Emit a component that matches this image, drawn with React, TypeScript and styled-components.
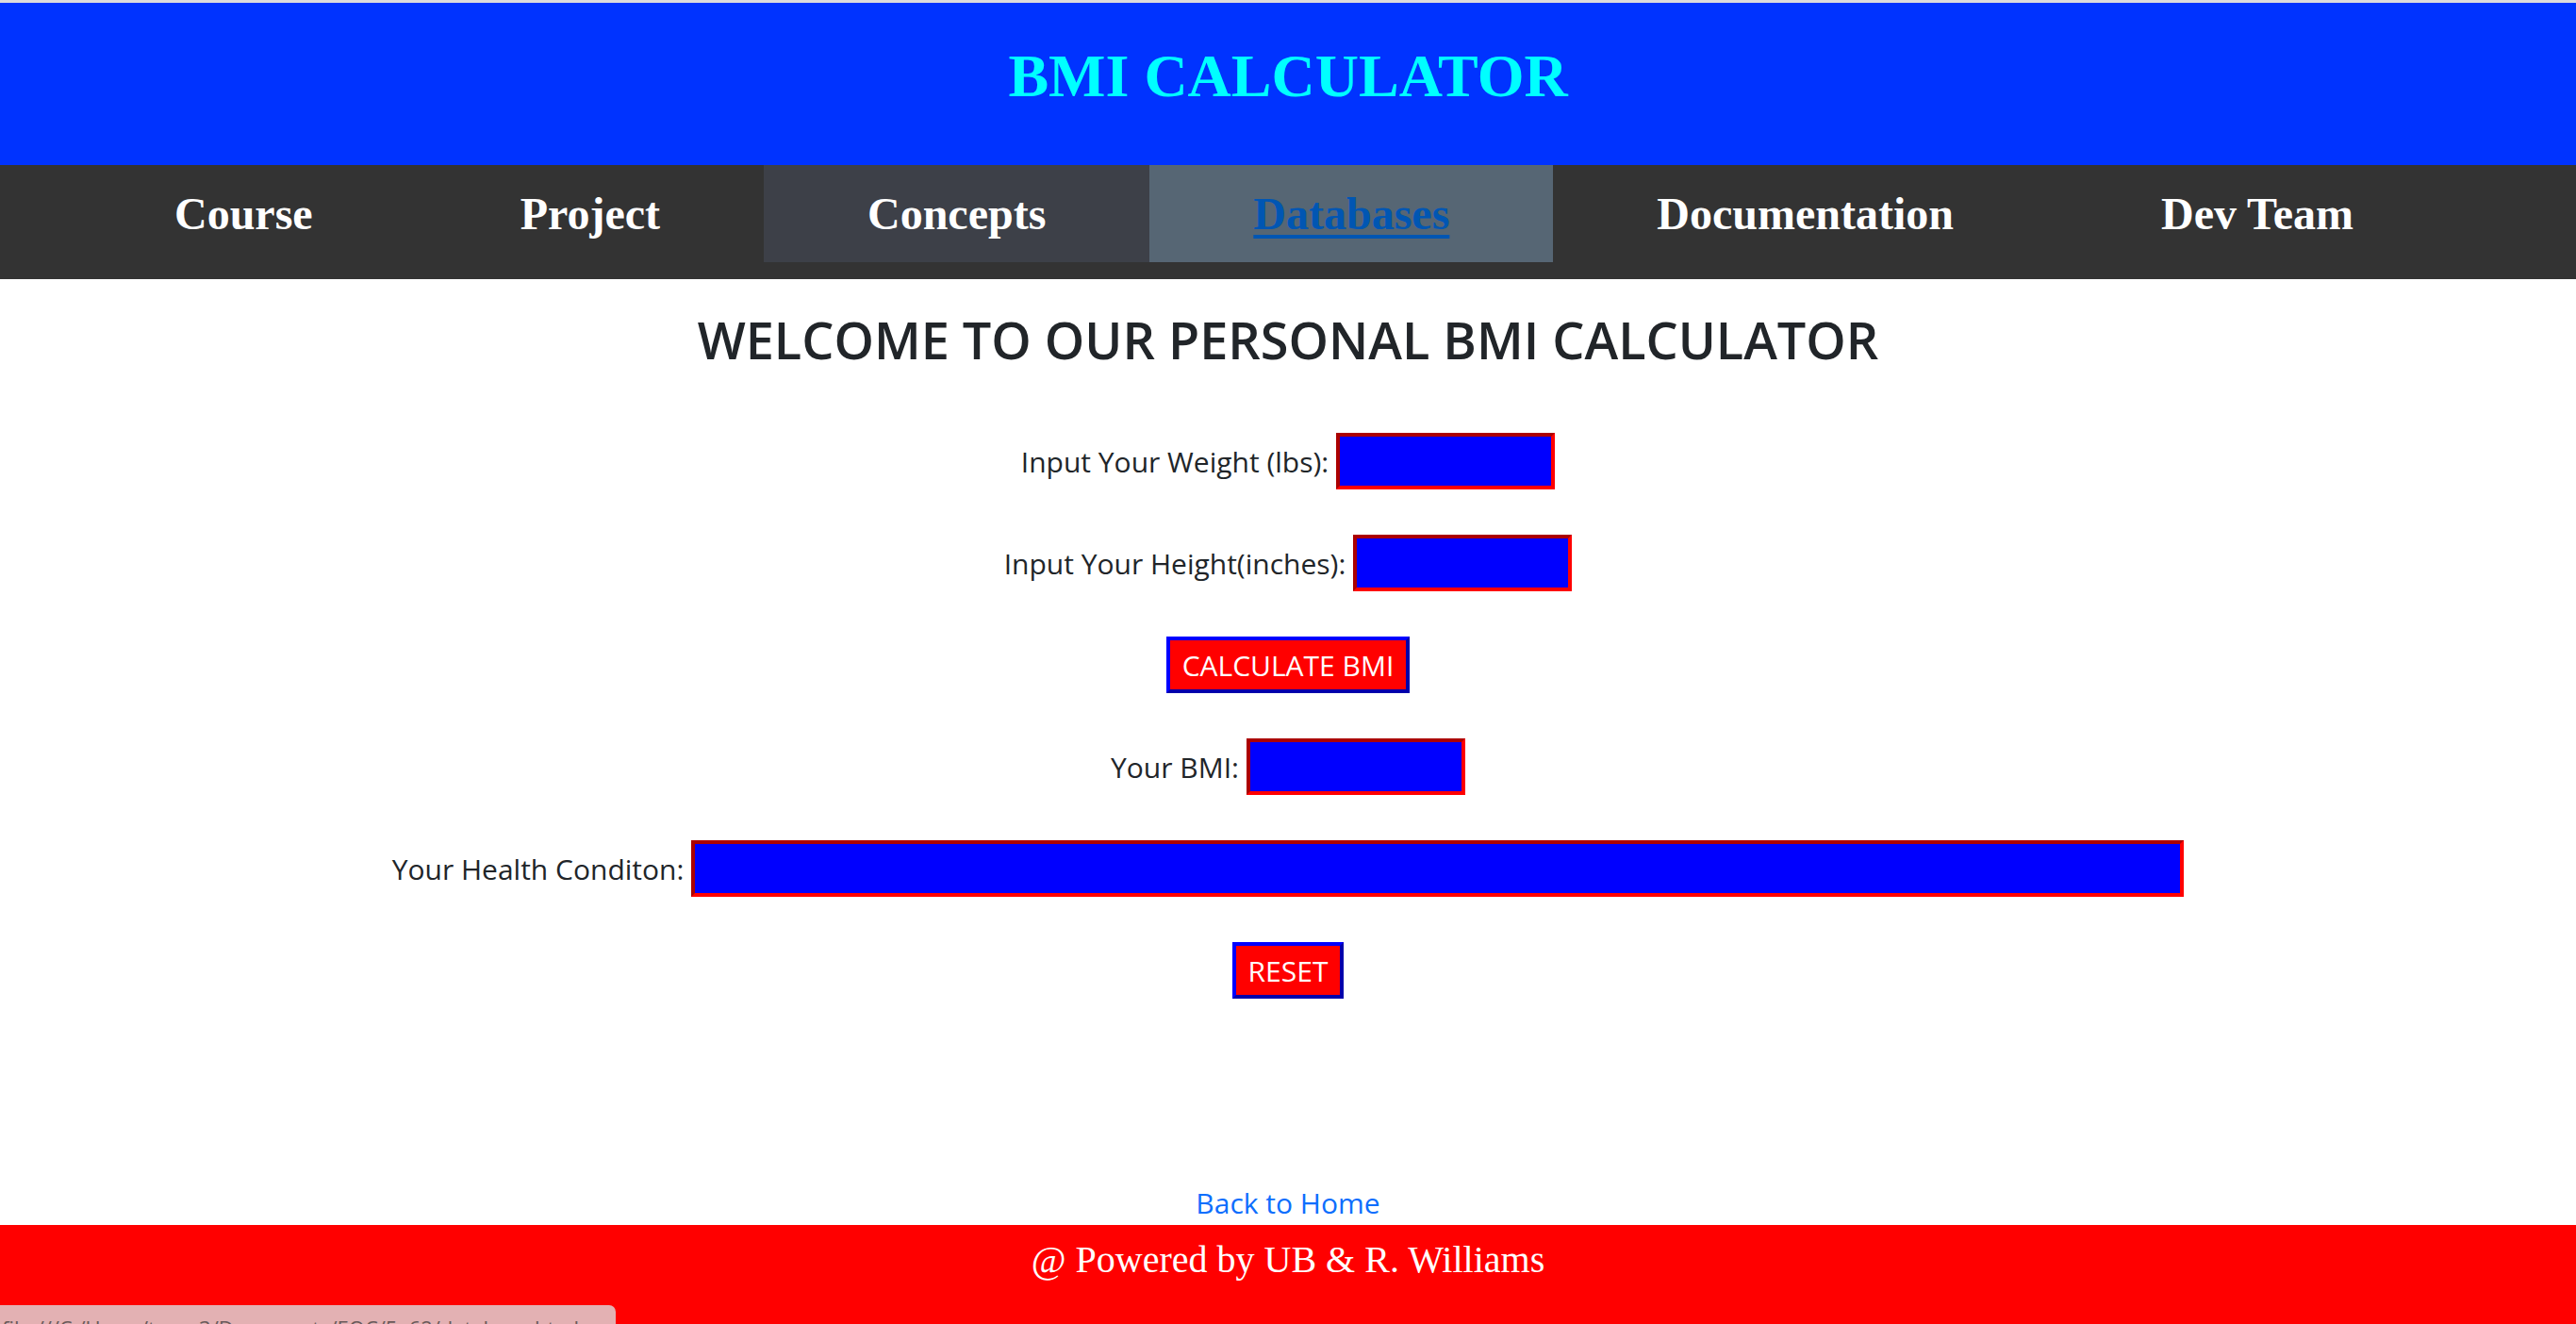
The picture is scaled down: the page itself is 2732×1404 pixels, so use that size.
import React from "react";
import styled, { createGlobalStyle, css } from "styled-components";

const GlobalStyle = createGlobalStyle`
  html, body {
    margin: 0;
    padding: 0;
    overflow: hidden;
  }
  body {
    font-family: "Open Sans", "Noto Sans", sans-serif;
    color: #212529;
    background: #ffffff;
  }
  * { box-sizing: border-box; }
`;

const Page = styled.div`
  display: flex;
  flex-direction: column;
  min-height: 1404px;
`;

const Header = styled.header`
  border-top: 3px solid #dcdcdc;
  background: #0033ff;
  padding: 41px 0 57px;
  text-align: center;
`;

const Title = styled.h1`
  margin: 0;
  font-family: "Liberation Serif", "Times New Roman", serif;
  font-weight: 700;
  font-size: 64px;
  line-height: 74px;
  color: #00ffff;
`;

const Nav = styled.nav`
  display: flex;
  background: #333333;
  padding: 0 0 18px 75px;
`;

type Variant = "plain" | "hover" | "current";

const NavItem = styled.a<{ $variant: Variant }>`
  display: block;
  padding: 24px 110px;
  font-family: "Liberation Serif", "Times New Roman", serif;
  font-weight: 700;
  font-size: 48px;
  line-height: 55px;
  color: #ffffff;
  text-decoration: none;
  white-space: nowrap;
  ${(p) =>
    p.$variant === "hover" &&
    css`
      background: #3d4048;
    `}
  ${(p) =>
    p.$variant === "current" &&
    css`
      background: #566674;
      color: #0056b3;
      text-decoration: underline;
      text-underline-offset: 6px;
      text-decoration-thickness: 4px;
    `}
`;

const Main = styled.main`
  display: flex;
  flex-direction: column;
  align-items: center;
  padding-top: 27px;
`;

const Heading = styled.h2`
  margin: 0;
  font-family: "Open Sans", sans-serif;
  font-weight: 600;
  font-size: 54px;
  line-height: 75px;
  color: #212529;
`;

const Form = styled.div`
  display: flex;
  flex-direction: column;
  align-items: center;
  gap: 48px;
  margin-top: 61px;
`;

const Row = styled.div`
  display: flex;
  align-items: center;
  justify-content: center;
  gap: 8px;
  height: 60px;
`;

const Label = styled.label`
  font-size: 30px;
  line-height: 41px;
  color: #212529;
`;

const Field = styled.input<{ $wide?: boolean }>`
  width: ${(p) => (p.$wide ? "1583px" : "232px")};
  height: 60px;
  margin: 0;
  padding: 0 8px;
  background: #0000ff;
  border: 4px inset #ff0000;
  color: #ffffff;
  font-family: "Open Sans", sans-serif;
  font-size: 30px;
  outline: none;
`;

const ActionButton = styled.button`
  height: 60px;
  margin: 0;
  padding: 0 13px;
  background: #ff0000;
  border: 4px outset #0000ff;
  color: #ffffff;
  font-family: "Open Sans", sans-serif;
  font-size: 30px;
  line-height: 41px;
  cursor: pointer;
`;

const BackLink = styled.a`
  margin-top: 196px;
  font-size: 30px;
  line-height: 41px;
  color: #0d6efd;
  text-decoration: none;
`;

const Footer = styled.footer`
  margin-top: 3px;
  height: 105px;
  background: #ff0000;
  padding-top: 14px;
  text-align: center;
  font-family: "Liberation Serif", "Times New Roman", serif;
  font-size: 40px;
  line-height: 46px;
  color: #ffffff;
`;

const StatusBubble = styled.div`
  position: fixed;
  left: 0;
  bottom: -22px;
  height: 42px;
  width: 653px;
  padding: 9px 0 0 2px;
  background: #e3b1b3;
  border-top-right-radius: 7px;
  font-family: "Open Sans", sans-serif;
  font-size: 22px;
  line-height: 30px;
  color: #6a5a5b;
  white-space: nowrap;
  overflow: hidden;
`;

const navLinks: { label: string; variant: Variant }[] = [
  { label: "Course", variant: "plain" },
  { label: "Project", variant: "plain" },
  { label: "Concepts", variant: "hover" },
  { label: "Databases", variant: "current" },
  { label: "Documentation", variant: "plain" },
  { label: "Dev Team", variant: "plain" },
];

export default function App() {
  return (
    <>
      <GlobalStyle />
      <Page>
        <Header>
          <Title>BMI CALCULATOR</Title>
        </Header>
        <Nav>
          {navLinks.map((l) => (
            <NavItem key={l.label} href="#" $variant={l.variant}>
              {l.label}
            </NavItem>
          ))}
        </Nav>
        <Main>
          <Heading>WELCOME TO OUR PERSONAL BMI CALCULATOR</Heading>
          <Form>
            <Row>
              <Label>Input Your Weight (lbs):</Label>
              <Field type="text" />
            </Row>
            <Row>
              <Label>Input Your Height(inches):</Label>
              <Field type="text" />
            </Row>
            <Row>
              <ActionButton>CALCULATE BMI</ActionButton>
            </Row>
            <Row>
              <Label>Your BMI:</Label>
              <Field type="text" />
            </Row>
            <Row>
              <Label>Your Health Conditon:</Label>
              <Field type="text" $wide />
            </Row>
            <Row>
              <ActionButton>RESET</ActionButton>
            </Row>
          </Form>
          <BackLink href="#">Back to Home</BackLink>
        </Main>
        <Footer>@ Powered by UB &amp; R. Williams</Footer>
      </Page>
      <StatusBubble>file:///C:/Users/tucor3/Documents/EOC/5a62/database.html</StatusBubble>
    </>
  );
}
